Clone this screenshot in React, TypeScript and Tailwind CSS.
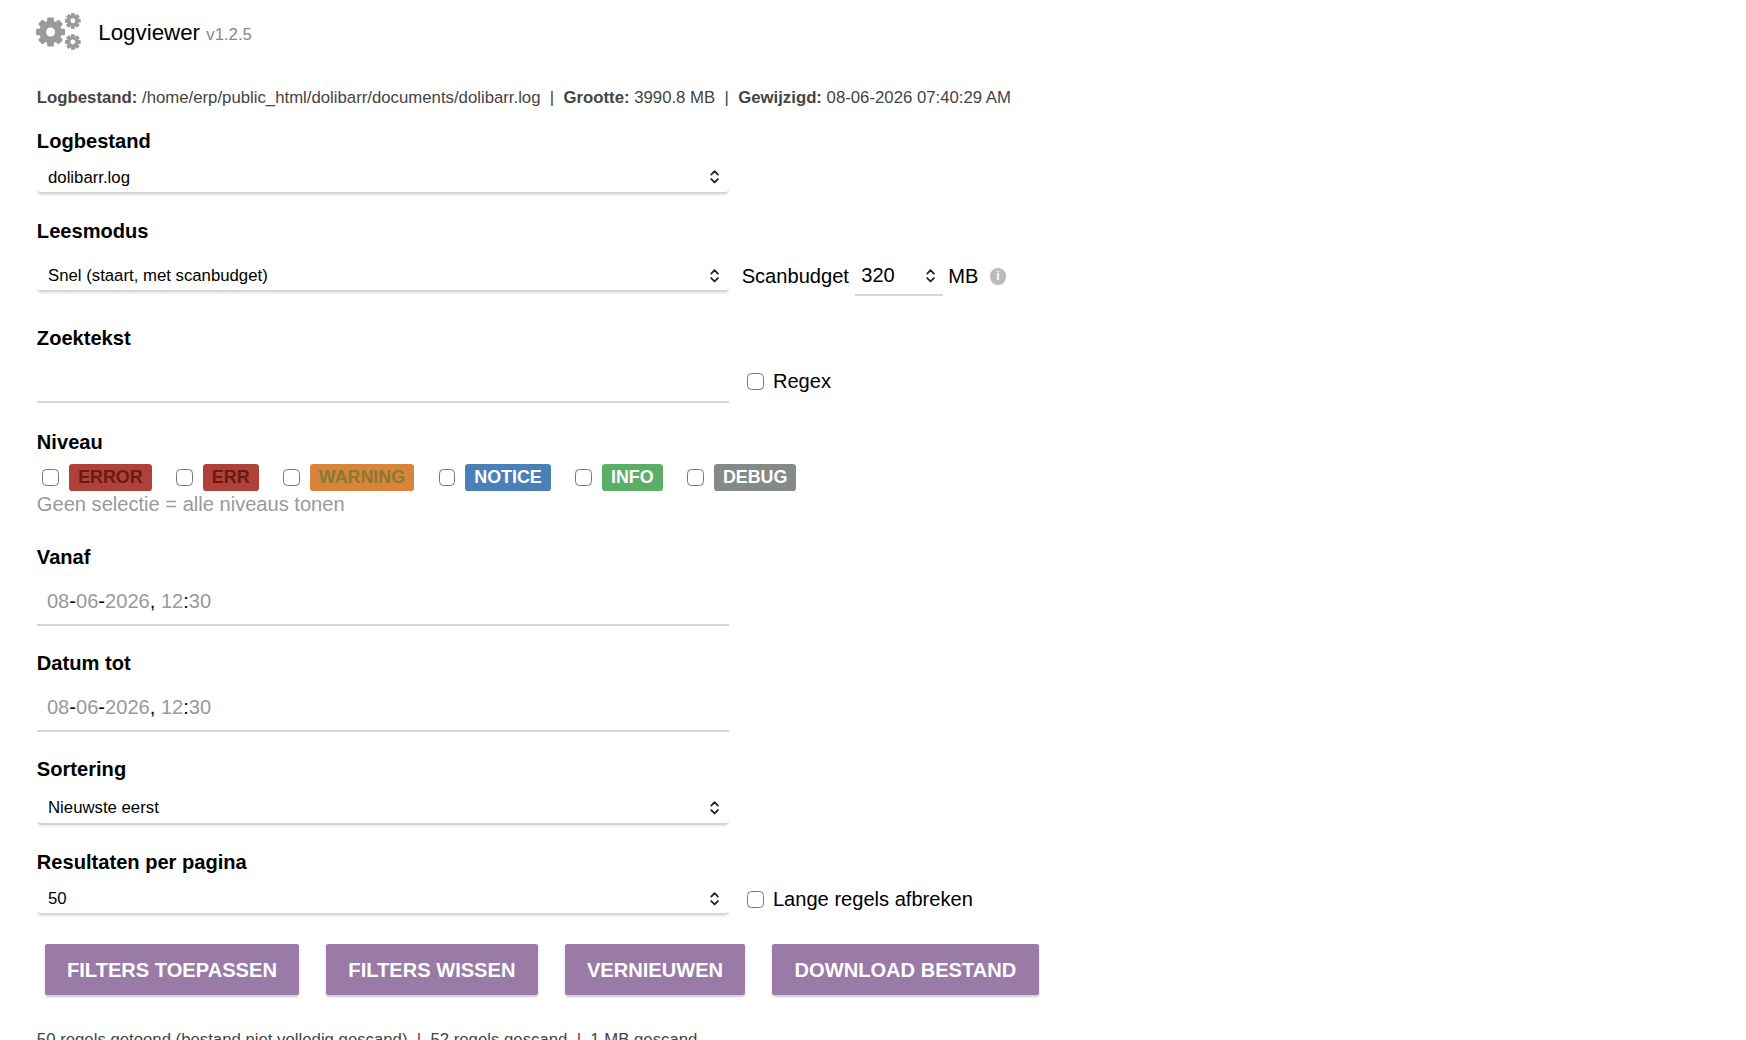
import React from "react";

const font = { fontFamily: '"Liberation Sans", Arial, sans-serif' };

const Chevrons = () => (
  <svg width="10" height="14" viewBox="0 0 10 14" fill="none" stroke="#222" strokeWidth="1.6" strokeLinecap="round" strokeLinejoin="round">
    <path d="M2 5l3-3 3 3M2 9l3 3 3-3" />
  </svg>
);

const Select = ({ value }: { value: string }) => (
  <div className="flex items-center justify-between w-[620px] h-[28px] pl-[10px] pr-[8px] rounded-[4px] border-b-2 border-[#d6d6d6] shadow-[0_1px_1px_rgba(0,0,0,0.06)] text-[15px] text-black">
    <span>{value}</span>
    <Chevrons />
  </div>
);

const Label = ({ children }: { children: React.ReactNode }) => (
  <div className="text-[18px] font-bold text-black">{children}</div>
);

const Box = () => <span className="inline-block w-[15px] h-[15px] rounded-[4px] border-[1.5px] border-[#777] bg-white" />;

const levels = [
  { t: "ERROR", c: "bg-[#b0403a] text-[#6a1a12]" },
  { t: "ERR", c: "bg-[#b0403a] text-[#6a1a12]" },
  { t: "WARNING", c: "bg-[#d8843b] text-[#8a7a30]" },
  { t: "NOTICE", c: "bg-[#4a80b8] text-white" },
  { t: "INFO", c: "bg-[#5aae68] text-white" },
  { t: "DEBUG", c: "bg-[#838a88] text-white" },
];

const DateInput = () => (
  <div className="w-[620px] h-[42px] flex items-center pl-[9px] border-b-2 border-[#d6d6d6] text-[18px] text-[#999]">
    08<span className="text-black">-</span>06<span className="text-black">-</span>2026<span className="text-black">,&nbsp;</span>12<span className="text-black">:</span>30
  </div>
);

const Gears = () => (
  <svg width="42" height="34" viewBox="0 0 42 34" fill="#9a9a9a">
    <g transform="translate(13 17)">
      {[0, 45, 90, 135].map((a) => (
        <rect key={a} x="-3" y="-13" width="6" height="26" rx="1" transform={`rotate(${a})`} />
      ))}
      <circle r="10" />
      <circle r="4" fill="white" />
    </g>
    {[[33, 7], [33, 26]].map(([x, y]) => (
      <g key={y} transform={`translate(${x} ${y})`}>
        {[0, 45, 90, 135].map((a) => (
          <rect key={a} x="-1.8" y="-7" width="3.6" height="14" rx="0.6" transform={`rotate(${a})`} />
        ))}
        <circle r="5.2" />
        <circle r="2.2" fill="white" />
      </g>
    ))}
  </svg>
);

const Btn = ({ children }: { children: React.ReactNode }) => (
  <button className="h-[46px] px-[20px] bg-[#9a7aa7] text-white font-bold text-[18px] rounded-[2px] shadow-[0_1px_2px_rgba(0,0,0,0.2)]">
    {children}
  </button>
);

export default function App() {
  return (
    <div className="bg-white min-h-screen">
      <div style={font} className="[zoom:1.117] pl-[33px] pt-[12px] text-[#333]">
        <div className="flex items-center gap-[14px] -ml-px">
          <Gears />
          <div className="text-[20px] text-black">
            Logviewer <span className="text-[15px] text-[#888]">v1.2.5</span>
          </div>
        </div>
        <div className="mt-[30px] text-[15px] text-[#444]">
          <b>Logbestand:</b> /home/erp/public_html/dolibarr/documents/dolibarr.log&nbsp; | &nbsp;<b>Grootte:</b> 3990.8 MB&nbsp; | &nbsp;<b>Gewijzigd:</b> 08-06-2026 07:40:29 AM
        </div>
        <div className="mt-[14px]"><Label>Logbestand</Label></div>
        <div className="mt-[6px]"><Select value="dolibarr.log" /></div>

        <div className="mt-[20px]"><Label>Leesmodus</Label></div>
        <div className="mt-[9px] flex items-center">
          <Select value="Snel (staart, met scanbudget)" />
          <span className="ml-[11px] text-[18px] text-black">Scanbudget</span>
          <div className="ml-[5px] flex items-center justify-between w-[79px] h-[36px] pl-[6px] pr-[6px] border-b-2 border-[#d6d6d6] text-[18px] text-black">
            320 <Chevrons />
          </div>
          <span className="ml-[5px] text-[18px] text-black">MB</span>
          <span className="ml-[10px] w-[15px] h-[15px] rounded-full bg-[#bbb] text-white text-[11px] font-bold flex items-center justify-center">i</span>
        </div>

        <div className="mt-[24px]"><Label>Zoektekst</Label></div>
        <div className="mt-[6px] flex items-center">
          <div className="w-[620px] h-[38px] border-b-2 border-[#d6d6d6]" />
          <span className="ml-[16px] flex items-center gap-[8px] text-[18px] text-black"><Box />Regex</span>
        </div>

        <div className="mt-[22px]"><Label>Niveau</Label></div>
        <div className="mt-[6px] flex items-center">
          {levels.map((l, i) => (
            <div key={l.t} className={`flex items-center gap-[9px] ${i ? "ml-[22px]" : "ml-[5px]"}`}>
              <Box />
              <span className={`px-[8px] h-[24px] flex items-center rounded-[3px] text-[16px] font-bold ${l.c}`}>{l.t}</span>
            </div>
          ))}
        </div>
        <div className="text-[18px] text-[#999] leading-[24px]">Geen selectie = alle niveaus tonen</div>

        <div className="mt-[22px]"><Label>Vanaf</Label></div>
        <div className="mt-[6px]"><DateInput /></div>
        <div className="mt-[20px]"><Label>Datum tot</Label></div>
        <div className="mt-[6px]"><DateInput /></div>

        <div className="mt-[20px]"><Label>Sortering</Label></div>
        <div className="mt-[8px]"><Select value="Nieuwste eerst" /></div>

        <div className="mt-[20px]"><Label>Resultaten per pagina</Label></div>
        <div className="mt-[6px] flex items-center">
          <Select value="50" />
          <span className="ml-[16px] flex items-center gap-[8px] text-[18px] text-black"><Box />Lange regels afbreken</span>
        </div>

        <div className="mt-[26px] ml-[7px] flex gap-[24px]">
          <Btn>FILTERS TOEPASSEN</Btn>
          <Btn>FILTERS WISSEN</Btn>
          <Btn>VERNIEUWEN</Btn>
          <Btn>DOWNLOAD BESTAND</Btn>
        </div>
        <div className="mt-[28px] text-[15px] text-[#444]">
          50 regels getoond (bestand niet volledig gescand)&nbsp; | &nbsp;52 regels gescand&nbsp; | &nbsp;1 MB gescand
        </div>
      </div>
    </div>
  );
}
